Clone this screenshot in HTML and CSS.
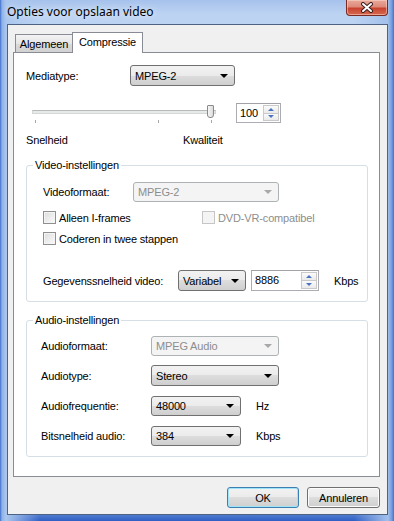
FILE: index.html
```html
<!DOCTYPE html>
<html lang="nl">
<head>
    <meta charset="UTF-8">
    <title>Opties voor opslaan video</title>
    <link rel="stylesheet" href="styles.css">
</head>
<body>
    <div class="window">
        <div class="titlebar">
            <span class="title">Opties voor opslaan video</span>
            <div class="close">
                <svg width="16" height="11" viewBox="0 0 16 11">
                    <path d="M4 2 L12 9 M12 2 L4 9" stroke="#3a1f1f" stroke-width="4" stroke-linecap="round"/>
                    <path d="M4 2 L12 9 M12 2 L4 9" stroke="#ffffff" stroke-width="2" stroke-linecap="round"/>
                </svg>
            </div>
        </div>

        <div class="client">
            <div class="tabs">
                <div class="tab">Algemeen</div>
                <div class="tab active">Compressie</div>
            </div>

            <div class="panel">
                <div class="row media-row">
                    <span class="label media-label">Mediatype:</span>
                    <div class="combo media-combo"><span class="val">MPEG-2</span><span class="arrow"></span></div>
                </div>

                <div class="row slider-row">
                    <div class="slider">
                        <div class="track"></div>
                        <div class="thumb"></div>
                        <div class="tick tick-a"></div>
                        <div class="tick tick-b"></div>
                        <div class="tick tick-c"></div>
                    </div>
                    <div class="spin quality-spin">
                        <span class="num">100</span>
                        <div class="spin-btns">
                            <div class="spin-btn"><span class="up"></span></div>
                            <div class="spin-btn"><span class="down"></span></div>
                        </div>
                    </div>
                </div>

                <div class="row scale-row">
                    <span class="speed-label">Snelheid</span>
                    <span>Kwaliteit</span>
                </div>

                <fieldset class="group video-group">
                    <legend>Video-instellingen</legend>

                    <div class="row vformat-row">
                        <span class="label vformat-label">Videoformaat:</span>
                        <div class="combo disabled vformat-combo"><span class="val">MPEG-2</span><span class="arrow"></span></div>
                    </div>

                    <div class="row check-row first-check">
                        <div class="check-item iframe-item">
                            <span class="checkbox"></span><span>Alleen I-frames</span>
                        </div>
                        <div class="check-item disabled">
                            <span class="checkbox"></span><span>DVD-VR-compatibel</span>
                        </div>
                    </div>

                    <div class="row check-row second-check">
                        <div class="check-item">
                            <span class="checkbox"></span><span>Coderen in twee stappen</span>
                        </div>
                    </div>

                    <div class="row rate-row">
                        <span class="label rate-label">Gegevenssnelheid video:</span>
                        <div class="combo rate-combo"><span class="val">Variabel</span><span class="arrow"></span></div>
                        <div class="spin rate-spin">
                            <span class="num">8886</span>
                            <div class="spin-btns">
                                <div class="spin-btn"><span class="up"></span></div>
                                <div class="spin-btn"><span class="down"></span></div>
                            </div>
                        </div>
                        <span class="unit rate-unit">Kbps</span>
                    </div>
                </fieldset>

                <fieldset class="group audio-group">
                    <legend>Audio-instellingen</legend>

                    <div class="row arow a1">
                        <span class="label alabel">Audioformaat:</span>
                        <div class="combo disabled wide-combo"><span class="val">MPEG Audio</span><span class="arrow"></span></div>
                    </div>
                    <div class="row arow a2">
                        <span class="label alabel">Audiotype:</span>
                        <div class="combo wide-combo"><span class="val">Stereo</span><span class="arrow"></span></div>
                    </div>
                    <div class="row arow a3">
                        <span class="label alabel">Audiofrequentie:</span>
                        <div class="combo short-combo"><span class="val">48000</span><span class="arrow"></span></div>
                        <span class="unit">Hz</span>
                    </div>
                    <div class="row arow a4">
                        <span class="label alabel">Bitsnelheid audio:</span>
                        <div class="combo short-combo"><span class="val">384</span><span class="arrow"></span></div>
                        <span class="unit">Kbps</span>
                    </div>
                </fieldset>
            </div>

            <div class="buttons">
                <button class="btn default">OK</button>
                <button class="btn">Annuleren</button>
            </div>
        </div>
    </div>
</body>
</html>
```

FILE: styles.css
```css
body {
    margin: 0;
    font-family: "Liberation Sans", Arial, sans-serif;
    font-size: 11px;
    letter-spacing: -0.15px;
    color: #000;
}

.window {
    width: 394px;
    height: 521px;
    box-sizing: border-box;
    background:
        linear-gradient(90deg, #3f6fcf 0, #8fb2e6 2px, #aac6ee 6px, rgba(170, 198, 238, 0) 40px, rgba(160, 192, 236, 0) 354px, #a3c0eb 388px, #6f98dd 392px, #3f6fcf 394px),
        linear-gradient(#a6c2ec 0, #bcd3f2 14px, #b4cdef 60%, #9dbce9 96%, #2f5fc4 100%);
    overflow: hidden;
}

.titlebar {
    height: 24px;
    display: flex;
    align-items: flex-start;
}

.title {
    font-family: "Noto Sans", sans-serif;
    font-size: 12px;
    letter-spacing: 0;
    line-height: 16px;
    padding: 4px 0 0 7px;
    color: #000;
    text-shadow: 0 0 6px rgba(255, 255, 255, 0.9);
    flex: 1;
}

.close {
    width: 42px;
    height: 16px;
    margin-right: 6px;
    box-sizing: border-box;
    border: 1px solid #7a2a22;
    border-top: none;
    border-radius: 0 0 4px 4px;
    background: linear-gradient(#e9aa9c 0, #dd8a79 45%, #c8432f 55%, #d66a52 100%);
    box-shadow: inset 0 0 0 1px rgba(255, 220, 210, 0.5);
    display: flex;
    align-items: center;
    justify-content: center;
}

.client {
    width: 381px;
    height: 491px;
    margin-left: 7px;
    box-sizing: border-box;
    border: 1px solid #4e6283;
    background-color: #f0f0f0;
    padding-top: 7px;
}

/* tabs */
.tabs {
    display: flex;
    align-items: flex-end;
    height: 20px;
    margin-left: 7px;
    position: relative;
    z-index: 1;
}

.tab {
    width: 58px;
    height: 18px;
    box-sizing: border-box;
    border: 1px solid #898c95;
    border-bottom: none;
    background: linear-gradient(#f3f3f3, #e6e6e6 50%, #dadada 50%, #d2d2d2);
    display: flex;
    align-items: center;
    justify-content: center;
    line-height: 14px;
}

.tab.active {
    width: 71px;
    height: 21px;
    margin-left: -1px;
    margin-bottom: -1px;
    background: #fff;
    padding-bottom: 2px;
}

.panel {
    width: 367px;
    height: 425px;
    margin-left: 5px;
    box-sizing: border-box;
    border: 1px solid #898c95;
    background-color: #fff;
    padding-left: 12px;
}

.row {
    display: flex;
    align-items: center;
    line-height: 14px;
}

.media-row {
    margin-top: 12px;
    height: 21px;
}

.media-label {
    width: 104px;
}

/* combo boxes */
.combo {
    height: 100%;
    box-sizing: border-box;
    display: flex;
    align-items: center;
    border: 1px solid #707070;
    border-radius: 3px;
    background: linear-gradient(#f2f2f2 0, #ebebeb 50%, #dddddd 50%, #cfcfcf 100%);
    padding-left: 4px;
}

.combo .val {
    flex: 1;
}

.combo .arrow {
    width: 0;
    height: 0;
    border-left: 4px solid transparent;
    border-right: 4px solid transparent;
    border-top: 4px solid #000;
    margin-right: 6px;
}

.combo.disabled {
    border-color: #adb2b5;
    background: #f4f4f4;
    color: #8d8d8d;
}

.combo.disabled .arrow {
    border-top-color: #a8a8a8;
}

.media-combo {
    width: 105px;
}

/* slider */
.slider-row {
    margin-top: 17px;
    height: 20px;
}

.slider {
    width: 184px;
    height: 20px;
    margin-left: 6px;
    position: relative;
}

.track {
    margin-top: 7px;
    height: 4px;
    box-sizing: border-box;
    border: 1px solid #d6d6d6;
    border-top-color: #b8b8b8;
    background-color: #e7eaea;
}

.thumb {
    position: absolute;
    left: 175px;
    top: 2px;
    width: 7px;
    height: 13px;
    box-sizing: border-box;
    border: 1px solid #8a8a8a;
    border-radius: 1px 1px 3px 3px;
    background: linear-gradient(90deg, #f6f6f6, #dcdcdc);
}

.tick {
    position: absolute;
    top: 17px;
    width: 1px;
    height: 3px;
    background-color: #a8a8a8;
}

.tick-a { left: 3px; }
.tick-b { left: 126px; }
.tick-c { left: 179px; }

/* spin boxes */
.spin {
    height: 100%;
    box-sizing: border-box;
    display: flex;
    border: 1px solid #abadb3;
    border-top-color: #a0a2a8;
    background-color: #fff;
    padding: 1px;
}

.spin .num {
    flex: 1;
    padding-left: 2px;
    line-height: 16px;
}

.spin-btns {
    width: 16px;
    display: flex;
    flex-direction: column;
}

.spin-btn {
    flex: 1;
    border: 1px solid #c9c9c9;
    background: linear-gradient(#fbfbfb, #eaeaea);
    display: flex;
    align-items: center;
    justify-content: center;
}

.spin-btn + .spin-btn {
    border-top: none;
}

.up {
    width: 0;
    height: 0;
    border-left: 3px solid transparent;
    border-right: 3px solid transparent;
    border-bottom: 3px solid #4a74bf;
}

.down {
    width: 0;
    height: 0;
    border-left: 3px solid transparent;
    border-right: 3px solid transparent;
    border-top: 3px solid #4a74bf;
}

.quality-spin {
    width: 45px;
    margin-left: 20px;
}

.scale-row {
    margin-top: 10px;
    height: 14px;
}

.speed-label {
    width: 157px;
}

/* group boxes */
.group {
    width: 342px;
    margin: 11px 0 0;
    padding: 0 0 10px 6px;
    box-sizing: border-box;
    border: 1px solid #d5dfe5;
    border-radius: 3px;
    min-width: 0;
}

.group legend {
    padding: 0 2px;
    line-height: 14px;
}

.video-group .row {
    margin-left: 10px;
}

.vformat-row {
    margin-top: 10px;
    height: 20px;
}

.vformat-label {
    width: 90px;
}

.vformat-combo {
    width: 146px;
}

.check-row {
    height: 13px;
}

.first-check {
    margin-top: 9px;
}

.second-check {
    margin-top: 8px;
}

.check-item {
    display: flex;
    align-items: center;
}

.iframe-item {
    width: 159px;
}

.checkbox {
    width: 13px;
    height: 13px;
    box-sizing: border-box;
    border: 1px solid #8e8f8f;
    background: linear-gradient(135deg, #dcdcdc, #fbfbfb);
    box-shadow: inset 0 0 0 1px #f4f4f4;
    margin-right: 3px;
}

.check-item.disabled {
    color: #8d8d8d;
}

.check-item.disabled .checkbox {
    border-color: #c6c6c6;
    background: #f4f4f4;
}

.rate-row {
    margin-top: 25px;
    height: 21px;
}

.rate-label {
    width: 135px;
}

.rate-combo {
    width: 68px;
}

.rate-spin {
    width: 68px;
    margin-left: 5px;
}

.rate-unit {
    margin-left: 17px;
}

.group.audio-group {
    margin-top: 11px;
}

.audio-group .row {
    margin-left: 8px;
}

.arow {
    height: 20px;
}

.a1 { margin-top: 9px; }
.a2 { margin-top: 9px; height: 21px; }
.a3 { margin-top: 10px; }
.a4 { margin-top: 10px; }

.alabel {
    width: 110px;
}

.wide-combo {
    width: 128px;
}

.short-combo {
    width: 90px;
}

.unit {
    margin-left: 15px;
}

/* dialog buttons */
.buttons {
    display: flex;
    justify-content: flex-end;
    gap: 8px;
    margin: 10px 7px 0 0;
}

.btn {
    width: 73px;
    height: 21px;
    box-sizing: border-box;
    border: 1px solid #707070;
    border-radius: 3px;
    background: linear-gradient(#f2f2f2 0, #ebebeb 50%, #dddddd 50%, #cfcfcf 100%);
    box-shadow: inset 0 0 0 1px #fcfcfc;
    font-family: "Liberation Sans", Arial, sans-serif;
    font-size: 11px;
    letter-spacing: -0.15px;
    color: #000;
    padding: 0;
}

.btn.default {
    width: 72px;
    border-color: #3c7fb1;
    box-shadow: inset 0 0 0 1px #9fe3f8;
}
```
